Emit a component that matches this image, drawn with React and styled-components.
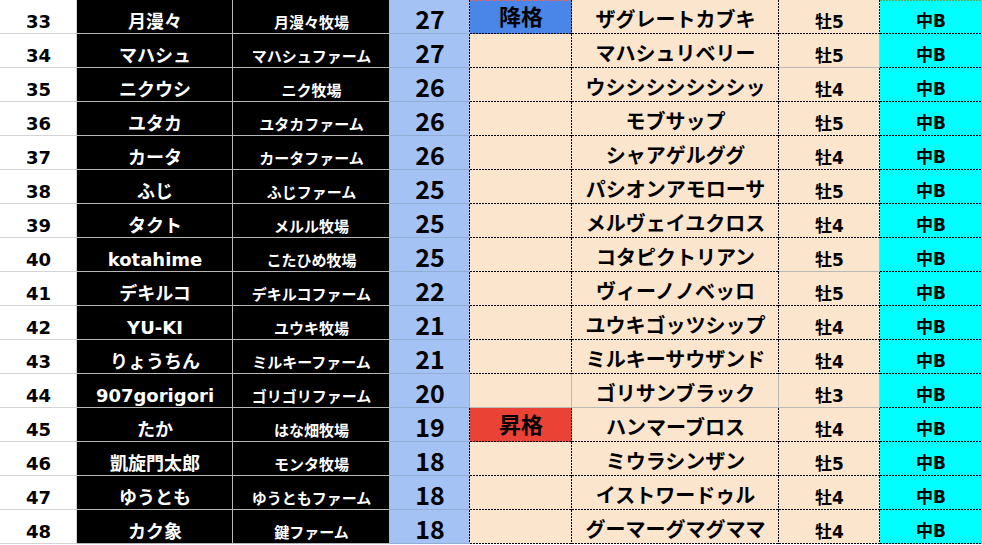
import React from "react";
import styled, { createGlobalStyle, css } from "styled-components";

const GlobalStyle = createGlobalStyle`
  html, body {
    margin: 0;
    padding: 0;
    background: #ffffff;
  }
  body {
    font-family: "DejaVu Sans", "Noto Sans CJK JP", sans-serif;
  }
`;

const WIDE = `"DejaVu Sans", "Noto Sans CJK JP", sans-serif`;
const NARROW = `"Noto Sans CJK JP", "Noto Sans", sans-serif`;

// 列ごとの見た目
const COLS = {
  rank: { bg: "#ffffff", color: "#000", size: 18, line: "#d4d4d4", pad: 10, font: WIDE },
  owner: { bg: "#000000", color: "#fff", size: 18, line: "#b7b7b7", pad: 10, font: WIDE },
  farm: { bg: "#000000", color: "#fff", size: 15, line: "#b7b7b7", pad: 12, font: WIDE },
  point: { bg: "#a4c2f4", color: "#000", size: 25, line: "#93acd6", pad: 1, font: NARROW },
  status: { bg: "#fce5cd", color: "#000", size: 22, line: "#000", pad: 3, font: WIDE, dotted: true },
  horse: { bg: "#fce5cd", color: "#000", size: 20, line: "#000", pad: 6, font: WIDE, dotted: true },
  sex: { bg: "#fce5cd", color: "#000", size: 17, line: "#000", pad: 10, font: WIDE, dotted: true },
  grade: { bg: "#00ffff", color: "#000", size: 17, line: "#000", pad: 8, font: WIDE, dotted: true },
};

const STATUS_BG = {
  降格: "#4a86e8",
  昇格: "#ea4335",
};

const GRAY = "#b8b8b8";

// 線の描き方（点線はタイルで 2px描いて1px空ける）
const lineStyle = (line, horizontal) =>
  line.dotted
    ? css`
        background-image: linear-gradient(
          ${horizontal ? "to right" : "to bottom"},
          ${line.color} 2px,
          transparent 2px
        );
        background-size: ${horizontal ? "3px 1px" : "1px 3px"};
        background-repeat: ${horizontal ? "repeat-x" : "repeat-y"};
      `
    : css`
        background: ${line.color};
      `;

const Sheet = styled.div`
  display: grid;
  grid-template-columns: 77px 156px 157px 80px 102px 207px 101px 102px;
  grid-auto-rows: 34px;
  width: 982px;
`;

const Cell = styled.div`
  position: relative;
  box-sizing: border-box;
  display: flex;
  align-items: center;
  justify-content: center;
  padding-top: ${(p) => p.$pad}px;
  background: ${(p) => p.$bg};
  color: ${(p) => p.$color};
  font-family: ${(p) => p.$font};
  font-size: ${(p) => p.$size}px;
  font-weight: 700;
  line-height: 1.2;
  white-space: nowrap;
  &::after {
    content: "";
    position: absolute;
    left: 0;
    right: 0;
    bottom: 0;
    height: 1px;
    ${(p) => lineStyle(p.$bottom, true)}
  }
  &::before {
    content: "";
    position: absolute;
    top: 0;
    bottom: 0;
    right: 0;
    width: ${(p) => (p.$right ? 1 : 0)}px;
    ${(p) => p.$right && lineStyle(p.$right, false)}
  }
`;

const TopDots = styled.span`
  position: absolute;
  top: 0;
  left: 0;
  right: 0;
  height: 1px;
  background-image: linear-gradient(to right, ${(p) => p.$color} 2px, transparent 2px);
  background-size: 3px 1px;
  background-repeat: repeat-x;
`;

const rows = [
  [33, "月漫々", "月漫々牧場", 27, "降格", "ザグレートカブキ", "牡5"],
  [34, "マハシュ", "マハシュファーム", 27, "", "マハシュリベリー", "牡5"],
  [35, "ニクウシ", "ニク牧場", 26, "", "ウシシシシシシシッ", "牡4"],
  [36, "ユタカ", "ユタカファーム", 26, "", "モブサップ", "牡5"],
  [37, "カータ", "カータファーム", 26, "", "シャアゲルググ", "牡4"],
  [38, "ふじ", "ふじファーム", 25, "", "パシオンアモローサ", "牡5"],
  [39, "タクト", "メルル牧場", 25, "", "メルヴェイユクロス", "牡4"],
  [40, "kotahime", "こたひめ牧場", 25, "", "コタピクトリアン", "牡5"],
  [41, "デキルコ", "デキルコファーム", 22, "", "ヴィーノノベッロ", "牡5"],
  [42, "YU-KI", "ユウキ牧場", 21, "", "ユウキゴッツシップ", "牡4"],
  [43, "りょうちん", "ミルキーファーム", 21, "", "ミルキーサウザンド", "牡4"],
  [44, "907gorigori", "ゴリゴリファーム", 20, "", "ゴリサンブラック", "牡3"],
  [45, "たか", "はな畑牧場", 19, "昇格", "ハンマーブロス", "牡4"],
  [46, "凱旋門太郎", "モンタ牧場", 18, "", "ミウラシンザン", "牡5"],
  [47, "ゆうとも", "ゆうともファーム", 18, "", "イストワードゥル", "牡4"],
  [48, "カク象", "鍵ファーム", 18, "", "グーマーグマグママ", "牡4"],
];

// 点線じゃなくて普通の枠になってるセル
const plainCells = {
  34: ["sex"],
  40: ["sex"],
  44: ["status", "horse", "sex"],
};

const KEYS = Object.keys(COLS);

function Row({ data, first }) {
  const [rank, owner, farm, point, status, horse, sex] = data;
  const values = { rank, owner, farm, point, status, horse, sex, grade: "中B" };
  const plain = plainCells[rank] || [];
  const lineOf = (key) =>
    plain.includes(key)
      ? { color: GRAY, dotted: false }
      : { color: COLS[key].line, dotted: !!COLS[key].dotted };

  return KEYS.map((key, i) => {
    const c = COLS[key];
    let bg = c.bg;
    if (key === "status" && STATUS_BG[status]) bg = STATUS_BG[status];
    let topLine = null;
    if (first && key === "status") topLine = "#e06666";
    if (first && key === "grade") topLine = "#6aa84f";

    // 右の線は隣が点線なら点線
    const next = KEYS[i + 1];
    let right = null;
    if (next) {
      const mine = lineOf(key);
      const theirs = lineOf(next);
      right = theirs.dotted && !plain.includes(key) ? theirs : mine;
    }

    return (
      <Cell
        key={key}
        $bg={bg}
        $color={c.color}
        $font={c.font}
        $size={c.size}
        $pad={c.pad}
        $bottom={lineOf(key)}
        $right={right}
      >
        {topLine && <TopDots $color={topLine} />}
        {values[key]}
      </Cell>
    );
  });
}

export default function App() {
  return (
    <>
      <GlobalStyle />
      <Sheet>
        {rows.map((r, i) => (
          <Row key={r[0]} data={r} first={i === 0} />
        ))}
      </Sheet>
    </>
  );
}
